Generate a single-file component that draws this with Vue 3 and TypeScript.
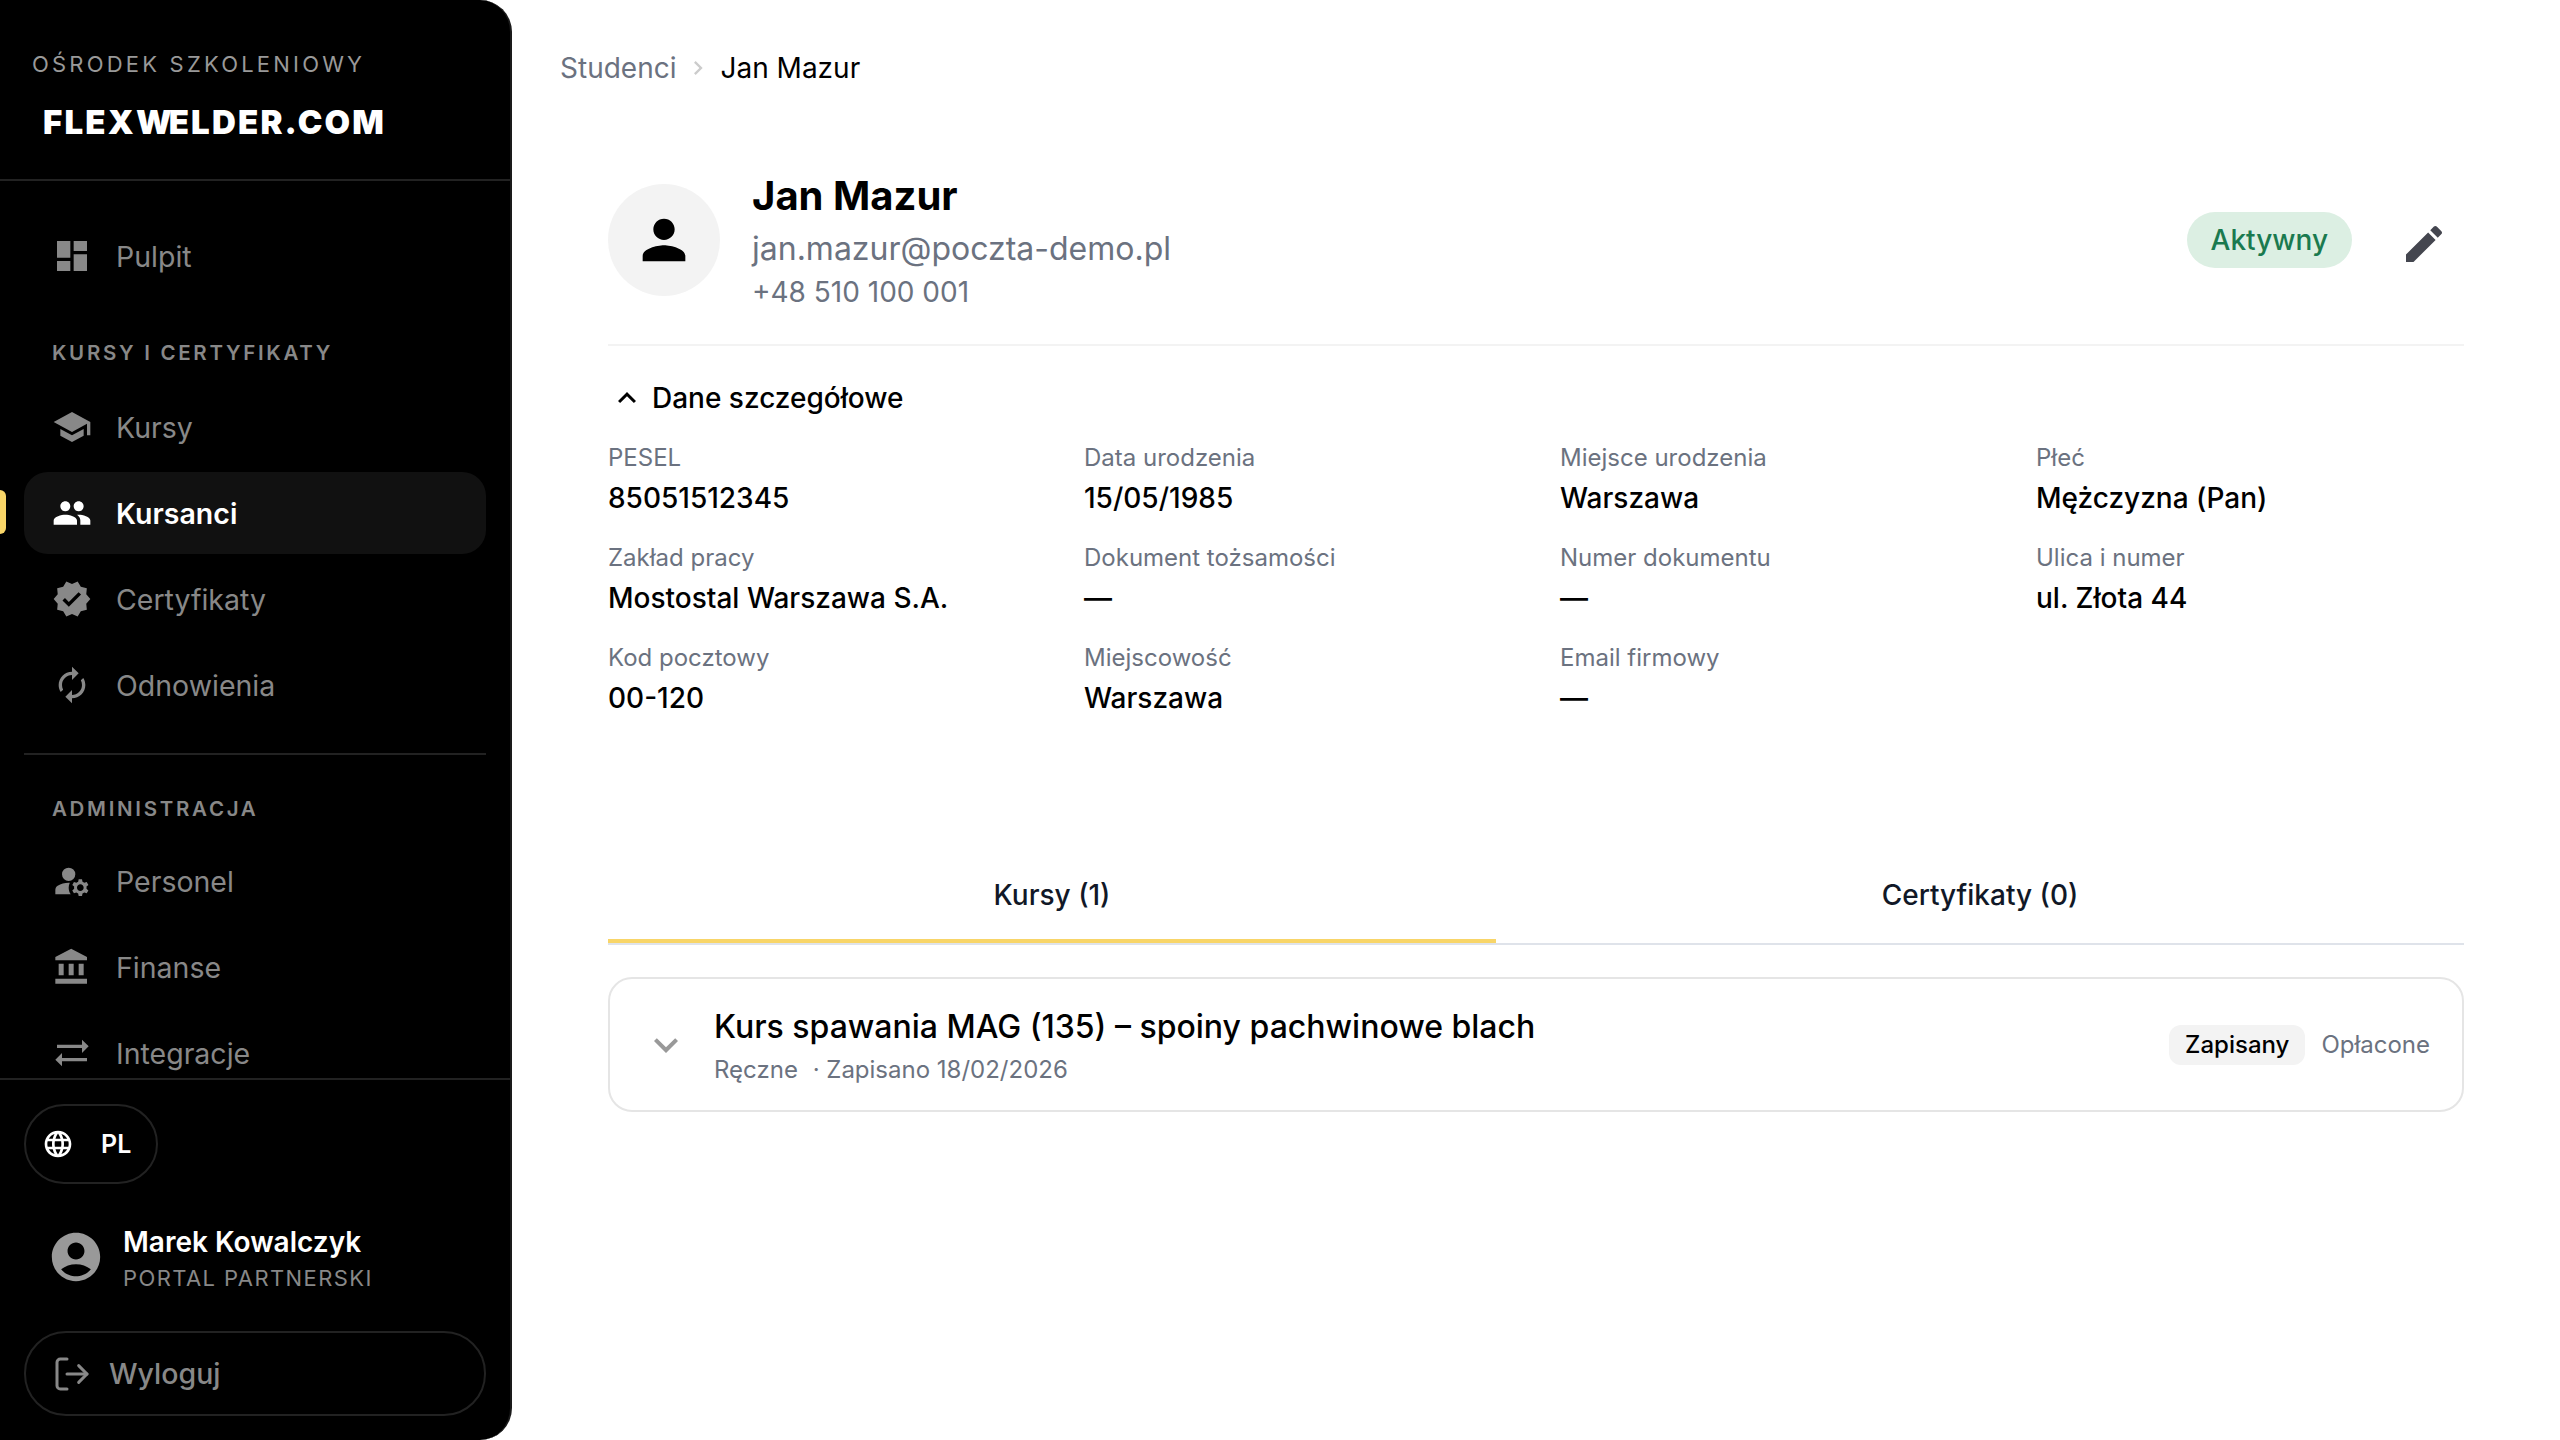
<template>
  <div class="layout">
    <aside class="sidebar">
      <div class="brand">
        <div class="brand-label">OŚRODEK SZKOLENIOWY</div>
        <div class="brand-logo">FLEX<span class="logo-w">W</span>ELDER.COM</div>
      </div>

      <nav class="nav">
        <template v-for="group in navGroups" :key="group.id">
          <div v-if="group.divider" class="nav-divider"></div>
          <div v-if="group.title" class="nav-title">{{ group.title }}</div>
          <div class="nav-list">
            <div
              v-for="item in group.items"
              :key="item.label"
              class="nav-item"
              :class="{ active: item.label === activeItem }"
            >
              <svg class="nav-icon" viewBox="0 0 24 24"><path :d="item.icon" /></svg>
              <span>{{ item.label }}</span>
            </div>
          </div>
        </template>
      </nav>

      <div class="side-footer">
        <div class="lang-pill">
          <svg class="lang-icon" viewBox="0 0 24 24"><path :d="icons.language" /></svg>
          <span>PL</span>
        </div>
        <div class="user">
          <svg class="user-icon" viewBox="0 0 24 24"><path :d="icons.account" /></svg>
          <div>
            <div class="user-name">Marek Kowalczyk</div>
            <div class="user-role">PORTAL PARTNERSKI</div>
          </div>
        </div>
        <div class="logout">
          <svg class="logout-icon" viewBox="0 0 24 24">
            <path d="M9 21H5a2 2 0 0 1-2-2V5a2 2 0 0 1 2-2h4" />
            <path d="M16 17l5-5-5-5" />
            <path d="M21 12H9" />
          </svg>
          <span>Wyloguj</span>
        </div>
      </div>
    </aside>

    <main class="main">
      <div class="breadcrumb">
        <span class="crumb-link">Studenci</span>
        <svg class="crumb-sep" viewBox="0 0 24 24"><path :d="icons.chevronRight" /></svg>
        <span class="crumb-current">Jan Mazur</span>
      </div>

      <section class="content">
        <header class="profile">
          <div class="avatar">
            <svg viewBox="0 0 24 24"><path :d="icons.person" /></svg>
          </div>
          <div class="profile-text">
            <h1>Jan Mazur</h1>
            <div class="email">jan.mazur@poczta-demo.pl</div>
            <div class="phone">+48 510 100 001</div>
          </div>
          <span class="status">Aktywny</span>
          <svg class="edit-icon" viewBox="0 0 24 24"><path :d="icons.edit" /></svg>
        </header>

        <div class="details-toggle">
          <svg viewBox="0 0 24 24"><path :d="icons.expandLess" /></svg>
          <span>Dane szczegółowe</span>
        </div>

        <div class="details-grid">
          <div v-for="field in fields" :key="field.label" class="field">
            <div class="field-label">{{ field.label }}</div>
            <div class="field-value">{{ field.value }}</div>
          </div>
        </div>

        <div class="tabs">
          <div class="tab tab-courses">Kursy (1)</div>
          <div class="tab tab-certs">Certyfikaty (0)</div>
        </div>

        <div class="course-card">
          <svg class="course-chevron" viewBox="0 0 24 24"><path :d="icons.expandMore" /></svg>
          <div class="course-text">
            <div class="course-title">Kurs spawania MAG (135) – spoiny pachwinowe blach</div>
            <div class="course-meta">Ręczne <span class="meta-dot">· Zapisano 18/02/2026</span></div>
          </div>
          <span class="course-badge">Zapisany</span>
          <span class="course-paid">Opłacone</span>
        </div>
      </section>
    </main>
  </div>
</template>

<script setup lang="ts">
const activeItem = 'Kursanci'

const icons = {
  dashboard: 'M3 13h8V3H3v10zm0 8h8v-6H3v6zm10 0h8V11h-8v10zm0-18v6h8V3h-8z',
  school: 'M5 13.18v4L12 21l7-3.82v-4L12 17l-7-3.82zM12 3L1 9l11 6 9-4.91V17h2V9L12 3z',
  people:
    'M16 11c1.66 0 2.99-1.34 2.99-3S17.66 5 16 5c-1.66 0-3 1.34-3 3s1.34 3 3 3zm-8 0c1.66 0 2.99-1.34 2.99-3S9.66 5 8 5C6.34 5 5 6.34 5 8s1.34 3 3 3zm0 2c-2.33 0-7 1.17-7 3.5V19h14v-2.5c0-2.33-4.67-3.5-7-3.5zm8 0c-.29 0-.62.02-.97.05 1.16.84 1.97 1.97 1.97 3.45V19h6v-2.5c0-2.33-4.67-3.5-7-3.5z',
  verified:
    'M23 12l-2.44-2.79.34-3.69-3.61-.82-1.89-3.2L12 2.96 8.6 1.5 6.71 4.69 3.1 5.5l.34 3.7L1 12l2.44 2.79-.34 3.7 3.61.82L8.6 22.5l3.4-1.47 3.4 1.46 1.89-3.19 3.61-.82-.34-3.69L23 12zm-12.91 4.72l-3.8-3.81 1.48-1.48 2.32 2.33 5.85-5.87 1.48 1.48-7.33 7.35z',
  autorenew:
    'M12 6v3l4-4-4-4v3c-4.42 0-8 3.58-8 8 0 1.57.46 3.03 1.24 4.26L6.7 14.8c-.45-.83-.7-1.79-.7-2.8 0-3.31 2.69-6 6-6zm6.76 1.74L17.3 9.2c.44.84.7 1.79.7 2.8 0 3.31-2.69 6-6 6v-3l-4 4 4 4v-3c4.42 0 8-3.58 8-8 0-1.57-.46-3.03-1.24-4.26z',
  manage:
    'M10.67 13.02c-.22-.01-.44-.02-.67-.02-2.42 0-4.68.67-6.61 1.82-.88.52-1.39 1.5-1.39 2.53V20h9.26c-.79-1.13-1.26-2.51-1.26-4 0-1.07.25-2.07.67-2.98zM10 12a4 4 0 1 0 0-8 4 4 0 0 0 0 8zM20.75 16c0-.22-.03-.42-.06-.63l1.14-1.01-1-1.73-1.45.49c-.32-.27-.68-.48-1.08-.63L18 11h-2l-.3 1.49c-.4.15-.76.36-1.08.63l-1.45-.49-1 1.73 1.14 1.01c-.03.21-.06.41-.06.63s.03.42.06.63l-1.14 1.01 1 1.73 1.45-.49c.32.27.68.48 1.08.63L16 21h2l.3-1.49c.4-.15.76-.36 1.08-.63l1.45.49 1-1.73-1.14-1.01c.03-.21.06-.41.06-.63zM17 18c-1.1 0-2-.9-2-2s.9-2 2-2 2 .9 2 2-.9 2-2 2z',
  bank: 'M4 10v7h3v-7H4zm6 0v7h3v-7h-3zM2 22h19v-3H2v3zm14-12v7h3v-7h-3zm-4.5-9L2 6v2h19V6l-9.5-5z',
  syncAlt: 'M22 8l-4-4v3H3v2h15v3l4-4zM2 16l4 4v-3h15v-2H6v-3l-4 4z',
  language:
    'M11.99 2C6.47 2 2 6.48 2 12s4.47 10 9.99 10C17.52 22 22 17.52 22 12S17.52 2 11.99 2zm6.93 6h-2.95c-.32-1.25-.78-2.45-1.38-3.56 1.84.63 3.37 1.91 4.33 3.56zM12 4.04c.83 1.2 1.48 2.53 1.91 3.96h-3.82c.43-1.43 1.08-2.76 1.91-3.96zM4.26 14C4.1 13.36 4 12.69 4 12s.1-1.36.26-2h3.38c-.08.66-.14 1.32-.14 2 0 .68.06 1.34.14 2H4.26zm.82 2h2.95c.32 1.25.78 2.45 1.38 3.56-1.84-.63-3.37-1.9-4.33-3.56zm2.95-8H5.08c.96-1.66 2.49-2.93 4.33-3.56C8.81 5.55 8.35 6.75 8.03 8zM12 19.96c-.83-1.2-1.48-2.53-1.91-3.96h3.82c-.43 1.43-1.08 2.76-1.91 3.96zM14.34 14H9.66c-.09-.66-.16-1.32-.16-2 0-.68.07-1.35.16-2h4.68c.09.65.16 1.32.16 2 0 .68-.07 1.34-.16 2zm.25 5.56c.6-1.11 1.06-2.31 1.38-3.56h2.95c-.96 1.65-2.49 2.93-4.33 3.56zM16.36 14c.08-.66.14-1.32.14-2 0-.68-.06-1.34-.14-2h3.38c.16.64.26 1.31.26 2s-.1 1.36-.26 2h-3.38z',
  account:
    'M12 2C6.48 2 2 6.48 2 12s4.48 10 10 10 10-4.48 10-10S17.52 2 12 2zm0 4c1.93 0 3.5 1.57 3.5 3.5S13.93 13 12 13s-3.5-1.57-3.5-3.5S10.07 6 12 6zm0 14c-2.03 0-4.43-.82-6.14-2.88C7.55 15.8 9.68 15 12 15s4.45.8 6.14 2.12C16.43 19.18 14.03 20 12 20z',
  person: 'M12 12c2.21 0 4-1.79 4-4s-1.79-4-4-4-4 1.79-4 4 1.79 4 4 4zm0 2c-2.67 0-8 1.34-8 4v2h16v-2c0-2.66-5.33-4-8-4z',
  edit: 'M3 17.25V21h3.75L17.81 9.94l-3.75-3.75L3 17.25zM20.71 7.04c.39-.39.39-1.02 0-1.41l-2.34-2.34c-.39-.39-1.02-.39-1.41 0l-1.83 1.83 3.75 3.75 1.83-1.83z',
  chevronRight: 'M10 6L8.59 7.41 13.17 12l-4.58 4.59L10 18l6-6z',
  expandLess: 'M12 8l-6 6 1.41 1.41L12 10.83l4.59 4.58L18 14z',
  expandMore: 'M16.59 8.59L12 13.17 7.41 8.59 6 10l6 6 6-6z',
}

const navGroups = [
  { id: 'top', items: [{ label: 'Pulpit', icon: icons.dashboard }] },
  {
    id: 'courses',
    title: 'KURSY I CERTYFIKATY',
    items: [
      { label: 'Kursy', icon: icons.school },
      { label: 'Kursanci', icon: icons.people },
      { label: 'Certyfikaty', icon: icons.verified },
      { label: 'Odnowienia', icon: icons.autorenew },
    ],
  },
  {
    id: 'admin',
    title: 'ADMINISTRACJA',
    divider: true,
    items: [
      { label: 'Personel', icon: icons.manage },
      { label: 'Finanse', icon: icons.bank },
      { label: 'Integracje', icon: icons.syncAlt },
    ],
  },
]

const fields = [
  { label: 'PESEL', value: '85051512345' },
  { label: 'Data urodzenia', value: '15/05/1985' },
  { label: 'Miejsce urodzenia', value: 'Warszawa' },
  { label: 'Płeć', value: 'Mężczyzna (Pan)' },
  { label: 'Zakład pracy', value: 'Mostostal Warszawa S.A.' },
  { label: 'Dokument tożsamości', value: '—' },
  { label: 'Numer dokumentu', value: '—' },
  { label: 'Ulica i numer', value: 'ul. Złota 44' },
  { label: 'Kod pocztowy', value: '00-120' },
  { label: 'Miejscowość', value: 'Warszawa' },
  { label: 'Email firmowy', value: '—' },
]
</script>

<style scoped>
.layout {
  display: flex;
  height: 1440px;
  overflow: hidden;
  font-family: "Inter", "Liberation Sans", sans-serif;
  color: #000;
}

.sidebar {
  flex: 0 0 512px;
  width: 512px;
  height: 1440px;
  box-sizing: border-box;
  display: flex;
  flex-direction: column;
  background: #000;
  border-right: 2px solid #1a1a1a;
  border-radius: 0 32px 32px 0;
  overflow: hidden;
}

.brand {
  height: 181px;
  flex: none;
  box-sizing: border-box;
  padding: 48px 32px 0;
  border-bottom: 2px solid #222;
}

.brand-label {
  font-size: 22px;
  line-height: 32px;
  letter-spacing: 3.2px;
  color: #999;
}

.brand-logo {
  margin: 22px 0 0 11px;
  font-size: 33px;
  line-height: 40px;
  font-weight: 900;
  letter-spacing: 2.2px;
  color: #fff;
}

.logo-w {
  letter-spacing: -3px;
}

.nav {
  flex: 1;
  min-height: 0;
  overflow: hidden;
  padding: 34px 24px 0;
}

.nav-title {
  margin: 42px 0 19px;
  padding-left: 28px;
  font-size: 20.5px;
  line-height: 28px;
  font-weight: 600;
  letter-spacing: 2.7px;
  color: #888;
}

.nav-divider {
  height: 2px;
  margin-top: 27px;
  background: #222;
}

.nav-divider + .nav-title {
  margin: 40px 0 17px;
}

.nav-list {
  display: flex;
  flex-direction: column;
  gap: 4px;
}

.nav-item {
  height: 82px;
  display: flex;
  align-items: center;
  gap: 24px;
  padding: 0 28px;
  border-radius: 24px;
  font-size: 28.5px;
  color: #888;
}

.nav-item.active {
  position: relative;
  background: #111;
  color: #fff;
  font-weight: 600;
}

.nav-item.active::before {
  content: "";
  position: absolute;
  left: -24px;
  top: 18px;
  width: 6px;
  height: 44px;
  border-radius: 0 6px 6px 0;
  background: #f8d568;
}

.nav-icon {
  width: 40px;
  height: 40px;
  flex: none;
  fill: currentColor;
}

.side-footer {
  flex: none;
  height: 362px;
  box-sizing: border-box;
  padding: 24px 24px 0;
  border-top: 2px solid #222;
}

.lang-pill {
  width: 134px;
  height: 80px;
  box-sizing: border-box;
  display: flex;
  align-items: center;
  gap: 27px;
  padding-left: 16px;
  border: 2px solid #222;
  border-radius: 40px;
  font-size: 25px;
  font-weight: 600;
  color: #fff;
}

.lang-icon {
  width: 32px;
  height: 32px;
  fill: #fff;
}

.user {
  display: flex;
  align-items: center;
  gap: 18px;
  margin-top: 38px;
  padding-left: 23px;
}

.user-icon {
  width: 58px;
  height: 58px;
  flex: none;
  margin-top: -2px;
  fill: #999;
}

.user-name {
  font-size: 28px;
  line-height: 40px;
  font-weight: 600;
  color: #fff;
}

.user-role {
  margin-top: 1px;
  font-size: 22px;
  line-height: 30px;
  letter-spacing: 1.4px;
  color: #888;
}

.logout {
  height: 85px;
  box-sizing: border-box;
  display: flex;
  align-items: center;
  gap: 17px;
  margin-top: 38px;
  padding-left: 26px;
  border: 2px solid #222;
  border-radius: 42px;
  font-size: 28.5px;
  font-weight: 500;
  color: #888;
}

.logout-icon {
  width: 40px;
  height: 40px;
  fill: none;
  stroke: #888;
  stroke-width: 1.8;
  stroke-linecap: round;
  stroke-linejoin: round;
}

.main {
  flex: 1;
  min-width: 0;
  padding: 0 96px 0 48px;
}

.breadcrumb {
  height: 136px;
  display: flex;
  align-items: center;
  gap: 8px;
  font-size: 28px;
}

.crumb-link {
  color: #6b7280;
}

.crumb-sep {
  width: 28px;
  height: 28px;
  fill: #ccc;
}

.content {
  padding-left: 48px;
}

.profile {
  display: flex;
  align-items: center;
  margin-top: 34px;
  padding-bottom: 34px;
  border-bottom: 2px solid #f3f3f3;
}

.avatar {
  width: 112px;
  height: 112px;
  flex: none;
  display: flex;
  align-items: center;
  justify-content: center;
  border-radius: 50%;
  background: #f3f3f3;
}

.avatar svg {
  width: 64px;
  height: 64px;
}

.profile-text {
  flex: 1;
  margin-left: 32px;
}

h1 {
  margin: 0 0 5px;
  font-size: 40px;
  line-height: 52px;
  font-weight: 700;
}

.email {
  font-size: 32px;
  line-height: 44px;
  color: #6b7280;
}

.phone {
  margin: 2px 0 -2px;
  font-size: 28px;
  line-height: 39px;
  color: #6b7280;
}

.status {
  height: 56px;
  display: flex;
  align-items: center;
  padding: 0 24px;
  border-radius: 28px;
  background: #dcefe3;
  color: #1a7a4f;
  font-size: 28px;
  font-weight: 500;
}

.edit-icon {
  width: 48px;
  height: 48px;
  margin: 8px 16px 0 48px;
  fill: #44464f;
}

.details-toggle {
  display: flex;
  align-items: center;
  gap: 7px;
  height: 40px;
  margin-top: 32px;
  padding-left: 1px;
  font-size: 28px;
  font-weight: 500;
}

.details-toggle svg {
  width: 36px;
  height: 36px;
}

.details-grid {
  display: grid;
  grid-template-columns: repeat(4, 1fr);
  column-gap: 48px;
  row-gap: 20px;
  margin-top: 22px;
}

.field-label {
  font-size: 24px;
  line-height: 36px;
  color: #6b7280;
}

.field-value {
  font-size: 28px;
  line-height: 44px;
  font-weight: 500;
}

.tabs {
  display: flex;
  height: 96px;
  margin-top: 127px;
  border-bottom: 2px solid #dfe3ea;
}

.tab {
  display: flex;
  align-items: center;
  justify-content: center;
  box-sizing: border-box;
  height: 96px;
  padding-top: 4px;
  font-size: 28px;
  font-weight: 500;
  color: #111827;
  border-bottom: 4px solid transparent;
}

.tab-courses {
  flex: 0 0 888px;
  border-bottom-color: #f8d568;
}

.tab-certs {
  flex: 1;
}

.course-card {
  display: flex;
  align-items: center;
  height: 135px;
  box-sizing: border-box;
  margin-top: 32px;
  padding: 0 32px;
  border: 2px solid #e5e5e5;
  border-radius: 24px;
}

.course-chevron {
  width: 48px;
  height: 48px;
  flex: none;
  fill: #999;
}

.course-text {
  flex: 1;
  margin-left: 24px;
  padding-top: 4px;
}

.course-title {
  font-size: 32px;
  line-height: 44px;
  font-weight: 500;
}

.course-meta {
  margin-top: 3px;
  font-size: 24px;
  line-height: 36px;
  color: #6b7280;
}

.meta-dot {
  margin-left: 8px;
}

.course-badge {
  display: flex;
  align-items: center;
  height: 40px;
  padding: 0 16px;
  border-radius: 12px;
  background: #f3f3f3;
  font-size: 24px;
  font-weight: 500;
}

.course-paid {
  margin-left: 16px;
  font-size: 24px;
  color: #6b7280;
}
</style>

<style>
html,
body {
  margin: 0;
  background: #fff;
}
</style>
